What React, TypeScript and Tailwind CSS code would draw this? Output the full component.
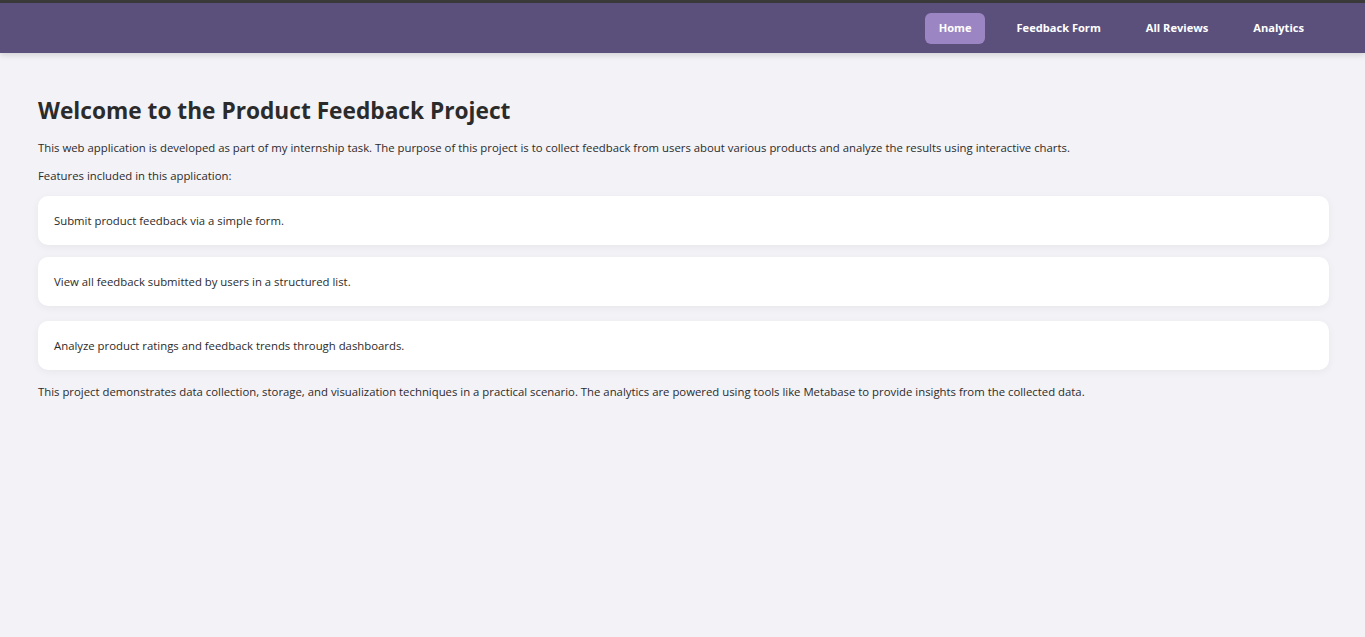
import React from 'react'

const navLinks = ['Home', 'Feedback Form', 'All Reviews', 'Analytics']

const features = [
  { text: 'Submit product feedback via a simple form.', mt: 'mt-0' },
  { text: 'View all feedback submitted by users in a structured list.', mt: 'mt-[12px]' },
  { text: 'Analyze product ratings and feedback trends through dashboards.', mt: 'mt-[15px]' },
]

export default function App() {
  return (
    <div
      className="min-h-[637px] bg-[#f3f2f7] text-[#2b2b2b]"
      style={{ fontFamily: '"Segoe UI", "Open Sans", "Noto Sans", sans-serif' }}
    >
      <div className="h-[3px] bg-[#3b3b3b]" />
      <nav className="flex h-[50px] items-center justify-end bg-[#5b4f7b] pr-[47px] pt-[1px] shadow-[0_2px_6px_rgba(0,0,0,0.15)]">
        <ul className="flex items-center gap-[17px]">
          {navLinks.map((link, i) => (
            <li key={link}>
              <a
                href="#"
                className={`flex h-[31px] items-center rounded-[6px] px-[14px] text-[11.1px] font-bold text-white ${
                  i === 0 ? 'bg-[#9b85c2]' : ''
                }`}
              >
                {link}
              </a>
            </li>
          ))}
        </ul>
      </nav>

      <main className="pl-[38px] pr-[36px] pt-[41px]">
        <h1 className="text-[22.7px] font-bold leading-[34px] text-[#2b2b2b]">
          Welcome to the Product Feedback Project
        </h1>
        <p className="mt-[11px] text-[11.35px] leading-[18px]">
          This web application is developed as part of my internship task. The purpose of this project is to collect
          feedback from users about various products and analyze the results using interactive charts.
        </p>
        <p className="mt-[10px] text-[11.35px] leading-[18px]">Features included in this application:</p>
        <ul className="mt-[11px]">
          {features.map((f) => (
            <li
              key={f.text}
              className={`${f.mt} flex h-[49px] items-center rounded-[10px] bg-white px-[16px] text-[11.35px] shadow-[0_2px_8px_rgba(0,0,0,0.05)]`}
            >
              {f.text}
            </li>
          ))}
        </ul>
        <p className="mt-[13px] text-[11.35px] leading-[18px]">
          This project demonstrates data collection, storage, and visualization techniques in a practical scenario. The
          analytics are powered using tools like Metabase to provide insights from the collected data.
        </p>
      </main>
    </div>
  )
}
